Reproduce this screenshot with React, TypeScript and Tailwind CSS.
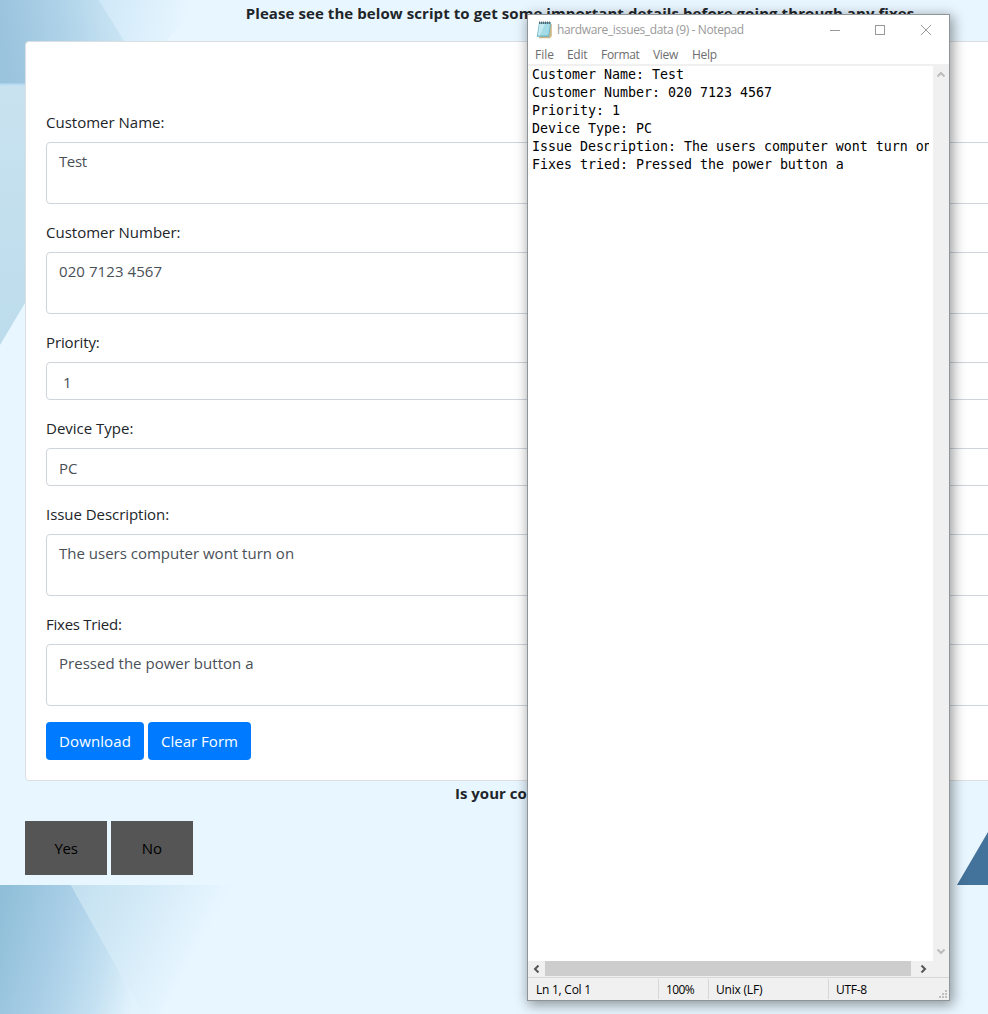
import React from "react";

const ui = "font-['Open_Sans','Noto_Sans',sans-serif]";

function Field({ label, value, tall, labelClass = "", valueClass = "" }: { label: string; value: string; tall?: boolean; labelClass?: string; valueClass?: string }) {
  return (
    <div className="mb-4">
      <div className="mb-2 flex h-6 items-center"><span className={`whitespace-nowrap text-[#212529] ${labelClass}`}>{label}</span></div>
      <div className={`rounded border border-[#ced4da] bg-white px-3 ${tall ? "h-[62px] pt-1.5" : "h-[38px] pt-[7px]"}`}>
        <div className="flex h-6 items-center"><span className={`whitespace-nowrap text-[#495057] ${valueClass}`}>{value}</span></div>
      </div>
    </div>
  );
}

function Backdrop() {
  return (
    <svg className="absolute inset-0" width="988" height="1014" viewBox="0 0 988 1014">
      <defs>
        <linearGradient id="deep" gradientUnits="userSpaceOnUse" x1="0" y1="900" x2="150" y2="940">
          <stop offset="0" stopColor="#8fbed8" />
          <stop offset="0.45" stopColor="#abd0e8" />
          <stop offset="0.75" stopColor="#c3e0f1" />
          <stop offset="1" stopColor="#e2f3fd" />
        </linearGradient>
        <linearGradient id="pale" gradientUnits="userSpaceOnUse" x1="75" y1="885" x2="195" y2="945">
          <stop offset="0" stopColor="#c3e0f0" />
          <stop offset="0.5" stopColor="#d3eaf7" />
          <stop offset="1" stopColor="#e6f5ff" />
        </linearGradient>
        <linearGradient id="top" gradientUnits="userSpaceOnUse" x1="0" y1="20" x2="125" y2="0">
          <stop offset="0" stopColor="#9ac3dd" />
          <stop offset="0.5" stopColor="#afd3e9" />
          <stop offset="1" stopColor="#cde7f5" />
        </linearGradient>
        <linearGradient id="topPale" gradientUnits="userSpaceOnUse" x1="100" y1="0" x2="190" y2="20">
          <stop offset="0" stopColor="#cfe8f8" />
          <stop offset="1" stopColor="#e8f6ff" />
        </linearGradient>
        <linearGradient id="side" x1="0" y1="0" x2="0" y2="1">
          <stop offset="0" stopColor="#c9e2f0" />
          <stop offset="1" stopColor="#bcdcec" />
        </linearGradient>
      </defs>
      <path d="M99 0H205L165 42H125Z" fill="url(#topPale)" />
      <path d="M0 0H99L125 42V84H0Z" fill="url(#top)" />
      <path d="M0 84H25V303L0 345Z" fill="url(#side)" />
      <path d="M0 84.500H25" stroke="#b9dcf2" strokeWidth="2" />
      <path d="M71 885H232L160 1014H143Z" fill="url(#pale)" />
      <path d="M0 885H71L143 1014H0Z" fill="url(#deep)" />
      <path d="M957 885L988 832V885Z" fill="#43729a" />
    </svg>
  );
}

function NotepadIcon() {
  return (
    <svg width="17" height="18" viewBox="0 0 17 18">
      <path d="M13 3H15.800V15L14 17.200H3V16Z" fill="#cdb888" />
      <path d="M3 2H15L13 15.800H0.800Z" fill="#69b3c6" />
      <path d="M3.500 3H14L12.300 14.500H2Z" fill="#a3dbe6" />
      <path d="M3.500 3H9L4 14.500H2Z" fill="#c2eaf0" />
      <path d="M3 1.500H15" stroke="#8fa5ac" strokeWidth="1" />
      <path d="M3.500 0.500V3M5.500 0.500V3M7.500 0.500V3M9.500 0.500V3M11.500 0.500V3M13.500 0.500V3" stroke="#4c5d64" strokeWidth="0.900" />
    </svg>
  );
}

function Notepad() {
  const lines = ["Customer Name: Test", "Customer Number: 020 7123 4567", "Priority: 1", "Device Type: PC", "Issue Description: The users computer wont turn on", "Fixes tried: Pressed the power button a"];
  return (
    <section className="absolute left-[527px] top-[14px] flex h-[987px] w-[423px] flex-col border border-[#8f9499] bg-white shadow-[2px_3px_12px_1px_rgba(0,0,0,0.4)]">
      <header className="flex h-[30px] items-center pl-[8px] text-[#999]">
        <NotepadIcon />
        <span className="ml-1 whitespace-nowrap text-[12px] tracking-[-0.37px]">hardware_issues_data (9) - Notepad</span>
        <svg className="ml-auto mr-[17px] shrink-0" width="102" height="12" viewBox="0 0 102 12" fill="none" stroke="#999" shapeRendering="crispEdges">
          <path d="M0 6.500H10" />
          <path d="M45.500 1.500H54.500V10.500H45.500Z" />
          <path d="M91 1L101 11M101 1L91 11" shapeRendering="auto" />
        </svg>
      </header>
      <nav className="flex h-[19px] items-center whitespace-nowrap pt-px text-[12px] text-[#6d6d6d]">
        <span className="ml-[7px] w-[32px]">File</span>
        <span className="w-[34px] tracking-[-0.3px]">Edit</span>
        <span className="w-[52px] tracking-[-0.3px]">Format</span>
        <span className="w-[39px] tracking-[-0.3px]">View</span>
        <span className="tracking-[-0.3px]">Help</span>
      </nav>
      <div className="h-[2px] bg-[#f0f0f0]" />
      <div className="flex h-[895px]">
        <div className="w-[405px] pl-1 pr-1">
          <div className="overflow-hidden font-['DejaVu_Sans_Mono',monospace] text-[13.29px] leading-[18px] text-black">
            {lines.map((l) => <div key={l} className="whitespace-pre">{l}</div>)}
          </div>
        </div>
        <div className="flex w-4 flex-col items-center justify-between bg-[#f0f0f0] pb-[6px] pt-[5px]">
          <svg width="8" height="7" fill="none" stroke="#bcbcbc" strokeWidth="2"><path d="M0.500 5.500L4 2L7.500 5.500" /></svg>
          <svg width="8" height="7" fill="none" stroke="#bcbcbc" strokeWidth="2"><path d="M0.500 1.500L4 5L7.500 1.500" /></svg>
        </div>
      </div>
      <div className="flex h-[16px] bg-[#f0f0f0]">
        <div className="flex w-[17px] items-center justify-center"><svg width="7" height="8" fill="none" stroke="#555" strokeWidth="2"><path d="M5.500 0.500L2 4L5.500 7.500" /></svg></div>
        <div className="h-[15px] w-[366px] bg-[#cdcdcd]" />
        <div className="ml-[4px] flex w-[17px] items-center justify-center"><svg width="7" height="8" fill="none" stroke="#555" strokeWidth="2"><path d="M1.500 0.500L5 4L1.500 7.500" /></svg></div>
      </div>
      <footer className="relative flex flex-1 items-stretch border-t border-[#d7d7d7] bg-[#f0f0f0] pb-px pt-px text-[12px] text-black">
        <div className="flex w-[131px] items-center border-r border-[#d7d7d7] pl-2 pt-[2px] tracking-[-0.25px]">Ln 1, Col 1</div>
        <div className="flex w-[50px] items-center border-r border-[#d7d7d7] pl-[7px] pt-[2px] tracking-[-0.6px]">100%</div>
        <div className="flex w-[120px] items-center border-r border-[#d7d7d7] pl-[7px] pt-[2px] tracking-[-0.2px]">Unix (LF)</div>
        <div className="flex items-center pl-[7px] pt-[2px] tracking-[-0.3px]">UTF-8</div>
        <svg className="absolute bottom-[2px] right-[2px]" width="8" height="8" fill="#bfbfbf"><path d="M6 0h2v2h-2zM3 3h2v2h-2zM6 3h2v2h-2zM0 6h2v2h-2zM3 6h2v2h-2zM6 6h2v2h-2z" /></svg>
      </footer>
    </section>
  );
}

export default function App() {
  return (
    <div className={`relative h-[1014px] w-full overflow-hidden bg-[#e8f6ff] text-[15px] ${ui}`}>
      <Backdrop />
      <main className="relative ml-[25px] w-[1110px]">
        <div className="flex h-[41px] justify-center pt-px font-bold text-[#212529]">
          <span className="h-6 whitespace-nowrap leading-6 tracking-[0.08px]">Please see the below script to get some important details before going through any fixes</span>
        </div>
        <div className="h-[740px] rounded border border-[#dcdfe2] bg-white px-5 pt-[68px]">
          <Field label="Customer Name:" value="Test" tall valueClass="tracking-[-0.4px]" />
          <Field label="Customer Number:" value="020 7123 4567" tall valueClass="tracking-[0.08px]" />
          <Field label="Priority:" value="1" labelClass="tracking-[-0.12px]" valueClass="ml-1" />
          <Field label="Device Type:" value="PC" />
          <Field label="Issue Description:" value="The users computer wont turn on" tall labelClass="tracking-[-0.05px]" />
          <Field label="Fixes Tried:" value="Pressed the power button a" tall labelClass="tracking-[-0.25px]" valueClass="tracking-[0.02px]" />
          <div className="flex gap-1 text-white">
            <button className="h-[38px] w-[98px] rounded bg-[#007bff] tracking-[0.1px]">Download</button>
            <button className="h-[38px] w-[103px] whitespace-nowrap rounded bg-[#007bff]">Clear Form</button>
          </div>
        </div>
        <div className="h-[40px] pl-[430px] font-bold leading-6 text-[#212529]">Is your co</div>
        <div className="flex gap-1 text-black">
          <button className="h-[54px] w-[82px] bg-[#555] tracking-[-0.3px]">Yes</button>
          <button className="h-[54px] w-[82px] bg-[#555]">No</button>
        </div>
      </main>
      <Notepad />
    </div>
  );
}
